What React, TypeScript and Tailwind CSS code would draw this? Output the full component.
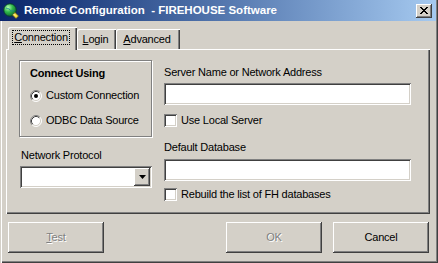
import type { ReactNode } from 'react';

const raised = 'shadow-[inset_-1px_-1px_0_#404040,inset_1px_1px_0_#ffffff,inset_-2px_-2px_0_#808080]';
const sunken = 'shadow-[inset_1px_1px_0_#808080,inset_-1px_-1px_0_#ffffff,inset_2px_2px_0_#404040,inset_-2px_-2px_0_#d4d0c8]';

export default function App() {
    return (
        <div className="w-[438px] h-[263px] bg-[#d4d0c8] flex flex-col font-['Liberation_Sans',Arial,sans-serif] text-[11px] leading-[13px] tracking-[-0.2px] text-black overflow-hidden shadow-[inset_1px_0_0_#d4d0c8,inset_2px_0_0_#ffffff,inset_-1px_-1px_0_#404040,inset_-2px_-2px_0_#808080]">
            {/* Title bar */}
            <div className="h-[21px] mr-[2px] shrink-0 flex items-center bg-linear-to-r from-[#0a246a] to-[#a6caf0]">
                <GlobeIcon />
                <span className="ml-[5px] text-white font-bold text-[11.5px] tracking-normal whitespace-pre">Remote Configuration  - FIREHOUSE Software</span>
                <button className={`ml-auto mr-[4px] w-[16px] h-[14px] bg-[#d4d0c8] flex items-center justify-center ${raised}`}>
                    <svg width="8" height="7" viewBox="0 0 8 7">
                        <path
                            fill="#000"
                            d="M0 0h2v1H0zM6 0h2v1H6zM1 1h2v1H1zM5 1h2v1H5zM2 2h4v1H2zM3 3h2v1H3zM2 4h4v1H2zM1 5h2v1H1zM5 5h2v1H5zM0 6h2v1H0zM6 6h2v1H6z"
                        />
                    </svg>
                </button>
            </div>

            {/* Tabs + panel */}
            <div className="flex flex-col pl-[6px] pr-[8px] pt-[6px]">
                <div className="flex items-end h-[22px] pl-[2px]">
                    <Tab active width="w-[69px]" mnemonic="C" rest="onnection" />
                    <Tab width="w-[39px]" mnemonic="L" rest="ogin" />
                    <Tab width="w-[64px]" mnemonic="A" rest="dvanced" />
                </div>
                <div className="h-[165px] flex pl-[13px] pt-[11px] shadow-[inset_1px_1px_0_#ffffff,inset_-1px_-1px_0_#404040,inset_-2px_-2px_0_#808080]">
                    {/* Left column */}
                    <div className="w-[133px] flex flex-col">
                        <div className="h-[77px] border border-[#808080] shadow-[1px_1px_0_#ffffff,inset_1px_1px_0_#ffffff] pl-[10px] pt-[6px] flex flex-col">
                            <span className="font-bold">Connect Using</span>
                            <Radio checked label="Custom Connection" className="mt-[9px]" />
                            <Radio label="ODBC Data Source" className="mt-[12px]" />
                        </div>
                        <span className="mt-[12px] ml-[2px]">Network Protocol</span>
                        <div className={`mt-[4px] ml-[1px] w-[132px] h-[22px] bg-white flex justify-end p-[2px] ${sunken}`}>
                            <div className={`w-[16px] h-[18px] bg-[#d4d0c8] flex items-center justify-center ${raised}`}>
                                <svg width="7" height="4" viewBox="0 0 7 4">
                                    <path d="M0 0h7L3.5 4z" fill="#000" />
                                </svg>
                            </div>
                        </div>
                    </div>

                    {/* Right column */}
                    <div className="ml-[12px] w-[247px] flex flex-col">
                        <span className="mt-[6px]">Server Name or Network Address</span>
                        <div className={`mt-[4px] h-[22px] bg-white ${sunken}`} />
                        <Check label="Use Local Server" className="mt-[9px]" />
                        <span className="mt-[14px]">Default Database</span>
                        <div className={`mt-[5px] h-[22px] bg-white ${sunken}`} />
                        <Check label="Rebuild the list of FH databases" className="mt-[7px]" />
                    </div>
                </div>
            </div>

            {/* Buttons */}
            <div className="flex pl-[8px] pr-[9px] mt-[8px] gap-[11px]">
                <Button disabled>
                    <u className="underline-offset-[1px]">T</u>est
                </Button>
                <div className="ml-auto" />
                <Button disabled>OK</Button>
                <Button>Cancel</Button>
            </div>
        </div>
    );
}

function Tab({ active, width, mnemonic, rest }: { active?: boolean; width: string; mnemonic: string; rest: string }) {
    return (
        <div
            className={`${width} flex justify-center bg-[#d4d0c8] rounded-tl-[2px] shadow-[inset_1px_1px_0_#ffffff,inset_-1px_0_0_#404040,inset_-2px_0_0_#808080] ${active
                ? 'h-[23px] -mb-px relative z-10 pt-[3px] pr-[3px]'
                : 'h-[20px] pt-[3px] pr-[2px]'
                }`}
        >
            <span className={`h-[15px] px-[1px] border ${active ? 'border-dotted border-black' : 'border-transparent'}`}>
                <u className="underline-offset-[1px]">{mnemonic}</u>
                {rest}
            </span>
        </div>
    );
}

function Radio({ checked, label, className }: { checked?: boolean; label: string; className?: string }) {
    return (
        <div className={`flex items-center h-[13px] ${className ?? ''}`}>
            <svg width="12" height="12" viewBox="0 0 12 12" className="shrink-0">
                <circle cx="6" cy="6" r="5" fill="#fff" />
                <path d="M2.11 9.89A5.5 5.5 0 0 1 9.89 2.11" fill="none" stroke="#808080" />
                <path d="M9.89 2.11A5.5 5.5 0 0 1 2.11 9.89" fill="none" stroke="#ffffff" />
                <path d="M2.82 9.18A4.5 4.5 0 0 1 9.18 2.82" fill="none" stroke="#404040" />
                <path d="M9.18 2.82A4.5 4.5 0 0 1 2.82 9.18" fill="none" stroke="#d4d0c8" />
                {checked && <circle cx="6" cy="6" r="2" fill="#000" />}
            </svg>
            <span className="ml-[4px] whitespace-nowrap">{label}</span>
        </div>
    );
}

function Check({ label, className }: { label: string; className?: string }) {
    return (
        <div className={`flex items-center h-[13px] ${className ?? ''}`}>
            <div className={`w-[13px] h-[13px] bg-white shrink-0 ${sunken}`} />
            <span className="ml-[4px] whitespace-nowrap">{label}</span>
        </div>
    );
}

function Button({ disabled, children }: { disabled?: boolean; children: ReactNode }) {
    return (
        <button
            className={`w-[96px] h-[31px] bg-[#d4d0c8] flex items-center justify-center ${raised} ${disabled
                ? 'text-[#808080] [text-shadow:1px_1px_0_#ffffff]'
                : 'text-black'
                }`}
        >
            <span>{children}</span>
        </button>
    );
}

function GlobeIcon() {
    return (
        <svg width="16" height="16" viewBox="0 0 16 16" className="ml-[3px] shrink-0">
            <defs>
                <radialGradient id="g" cx="0.35" cy="0.3" r="0.8">
                    <stop offset="0" stopColor="#b8ffb0" />
                    <stop offset="0.45" stopColor="#2fb84a" />
                    <stop offset="1" stopColor="#0a5a2a" />
                </radialGradient>
            </defs>
            <circle cx="7" cy="7" r="6.3" fill="url(#g)" stroke="#083a30" strokeWidth="1" />
            <path d="M3 5c2 1 3 0 4 2s3 1 4 0" fill="none" stroke="#1a7a9a" strokeWidth="0.8" />
            <path d="M12 9.5l3.5 3.5-2.5 2.5-3.5-3.5z" fill="#f8e040" stroke="#6a5a10" strokeWidth="0.7" />
            <path d="M10.5 11l1.5 1.5" stroke="#ffffff" strokeWidth="0.7" />
        </svg>
    );
}
